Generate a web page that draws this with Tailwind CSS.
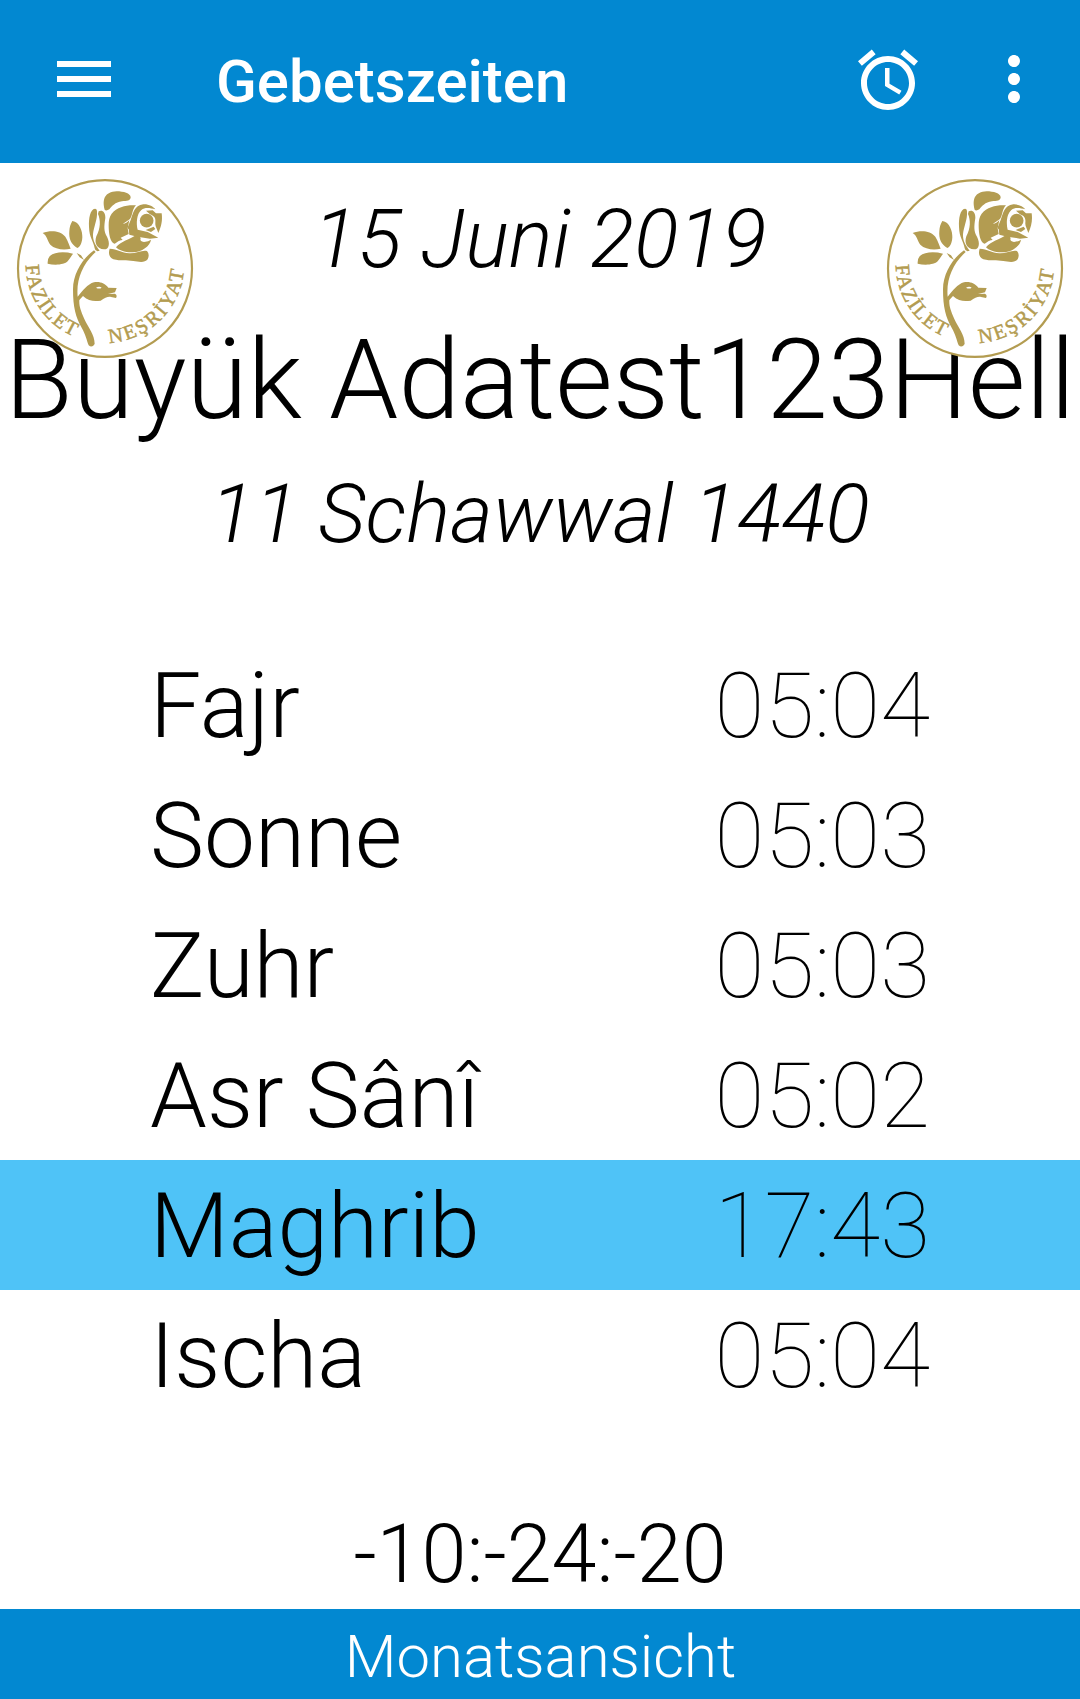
<!DOCTYPE html>
<html lang="de"><head><meta charset="utf-8"><title>Gebetszeiten</title>
<script src="https://cdn.jsdelivr.net/npm/@tailwindcss/browser@4"></script></head>
<body class="relative flex h-[1699px] w-[1080px] flex-col overflow-hidden bg-white font-[Roboto,sans-serif] text-black">
<header class="flex h-[163px] shrink-0 items-center bg-[#0288d1] pr-[30px] pl-12 text-white">
  <svg class="mb-[5px] size-[72px]" viewBox="0 0 24 24" fill="currentColor"><path d="M3 18h18v-2H3v2zm0-5h18v-2H3v2zm0-7v2h18V6H3z"/></svg>
  <h1 class="ml-24 text-[60px] leading-none font-medium">Gebetszeiten</h1>
  <svg class="mb-[3px] ml-auto size-[72px]" viewBox="0 0 24 24" fill="currentColor"><path d="M22 5.72l-4.6-3.86-1.29 1.53 4.6 3.86L22 5.72zM7.88 3.39L6.6 1.86 2 5.71l1.29 1.53 4.59-3.85zM12.5 8H11v6l4.75 2.85.75-1.23-4-2.37V8zM12 4c-4.97 0-9 4.03-9 9s4.02 9 9 9c4.97 0 9-4.03 9-9s-4.03-9-9-9zm0 16c-3.87 0-7-3.13-7-7s3.13-7 7-7 7 3.13 7 7-3.13 7-7 7z"/></svg>
  <svg class="mb-[5px] ml-[54px] size-[72px]" viewBox="0 0 24 24" fill="currentColor"><path d="M12 8c1.1 0 2-.9 2-2s-.9-2-2-2-2 .9-2 2 .9 2 2 2zm0 2c-1.1 0-2 .9-2 2s.9 2 2 2 2-.9 2-2-.9-2-2-2zm0 6c-1.1 0-2 .9-2 2s.9 2 2 2 2-.9 2-2-.9-2-2-2z"/></svg>
</header>
<main class="flex flex-1 flex-col">
  <p class="text-center text-[82px] leading-[152px] font-light italic">15 Juni 2019</p>
  <h2 class="text-center text-[111px] leading-[130px] font-light whitespace-nowrap">Büyük Adatest123Hell</h2>
  <p class="text-center text-[82px] leading-[138px] font-light italic">11 Schawwal 1440</p>
  <ul class="mt-[57px] text-[91px] leading-[130px]">
    <li class="flex h-[130px] justify-between px-[150px] pt-px"><span class="font-light">Fajr</span><span class="font-thin">05:04</span></li>
    <li class="flex h-[130px] justify-between px-[150px] pt-px"><span class="font-light">Sonne</span><span class="font-thin">05:03</span></li>
    <li class="flex h-[130px] justify-between px-[150px] pt-px"><span class="font-light">Zuhr</span><span class="font-thin">05:03</span></li>
    <li class="flex h-[130px] justify-between px-[150px] pt-px"><span class="font-light">Asr Sânî</span><span class="font-thin">05:02</span></li>
    <li class="flex h-[130px] justify-between bg-[#4fc3f7] px-[150px] pt-px"><span class="font-light">Maghrib</span><span class="font-thin">17:43</span></li>
    <li class="flex h-[130px] justify-between px-[150px] pt-px"><span class="font-light">Ischa</span><span class="font-thin">05:04</span></li>
  </ul>
  <p class="mt-auto text-center text-[81px] leading-[108px] font-light">-10:-24:-20</p>
</main>
<footer class="h-[90px] shrink-0 bg-[#0288d1] pt-[3px] pl-px text-center text-[59.8px] leading-[90px] font-light text-white">Monatsansicht</footer>

<svg class="absolute top-[178px] left-4 h-[181px] w-[178px]" viewBox="48 54 534 543">
  <defs>
    <path id="ring" d="M77 309A238 240 0 0 0 553 309"/>
    <g id="seal">
      <ellipse cx="315" cy="325.500" rx="261" ry="265" fill="#fff" stroke="#b39c51" stroke-width="6.500"/>
      <g fill="#b39c51">
        <path d="M314 149C306 118 314 96 350 94C370 94 392 100 392 112C392 122 380 123 366 124C345 127 336 138 328 148C322 152 316 152 314 149Z"/>
        <path d="M285 146C270 148 266 175 267 200C268 235 280 240 284 265Q286 277 299 272C287 257 278 242 279 223C281 200 293 178 291 155Q291 146 285 146Z"/>
        <path d="M296 154C306 148 317 156 316 174C312 200 311 214 321 230C331 250 328 268 312 268C291 267 282 250 289 229C302 205 302 180 294 162Z"/>
        <path d="M335 161C352 140 382 134 408 136C396 148 399 163 390 177L368 192Q380 191 388 180L383 205L386 222L362 233L368 240C352 242 350 250 343 251C330 247 326 220 326 196C326 182 328 170 335 161Z"/>
        <path d="M392 180C400 160 402 136 430 133C446 132 460 140 466 148C450 144 435 141 424 150C410 162 408 190 413 209L443 216L475 233L450 236L412 230L388 224L386 207C380 206 386 195 392 180Z"/>
        <circle cx="440" cy="182" r="20.500"/>
        <path d="M438 152L458 151L468 160L485 160C488 182 484 199 475 219C471 205 465 199 466 188C467 177 466 169 450 163ZM437 210L461 200L466 207L453 216Z"/>
        <path d="M348 262C362 243 388 240 413 221L422 234Q418 244 432 246Q446 244 453 239C451 258 425 276 399 277C376 278 356 271 348 262Z"/>
        <path d="M329 266C352 266 365 279 388 280C410 281 426 269 441 273Q450 283 443 298C434 310 414 305 400 303C380 300 362 304 340 298C326 292 325 278 329 266Z"/>
        <path d="M128 219C150 210 181 211 196 230C205 244 208 257 212 266C191 271 165 268 151 254C140 240 143 229 128 219Z"/>
        <path d="M217 183C239 185 248 216 247 232C246 250 240 261 232 264C213 253 206 236 208 213C209 202 211 193 217 183Z"/>
        <path d="M219 281C192 274 161 276 149 289Q142 297 143 311C165 317 194 314 203 304Q210 295 219 281ZM230 279L243 286L252 300L239 292Z"/>
        <path d="M282 271C247 295 219 342 219 388C219 442 227 472 245 503C257 524 260 540 266 556Q276 565 284 552C284 524 265 503 253 477C241 450 237 437 238 420L249 408C266 424 283 425 302 422C315 413 326 408 333 411L348 414Q353 406 345 401L324 402L345 397L350 384L325 383C314 371 302 364 282 367C263 372 247 393 233 410C228 358 249 310 287 276Z"/>
        <path fill="#fff" d="M288 383Q298 378 305 383Q298 388 288 383Z"/>
        <g font-family="Liberation Serif, serif" font-size="61" stroke="#b39c51" stroke-width="1.500">
          <text><textPath href="#ring" startOffset="6" textLength="272">FAZİLET</textPath></text>
          <text><textPath href="#ring" startOffset="388" textLength="340">NEŞRİYAT</textPath></text>
        </g>
      </g>
    </g>
  </defs>
  <use href="#seal"/>
</svg>
<svg class="absolute top-[178px] left-[886px] h-[181px] w-[178px]" viewBox="48 54 534 543"><use href="#seal"/></svg>
</body></html>
